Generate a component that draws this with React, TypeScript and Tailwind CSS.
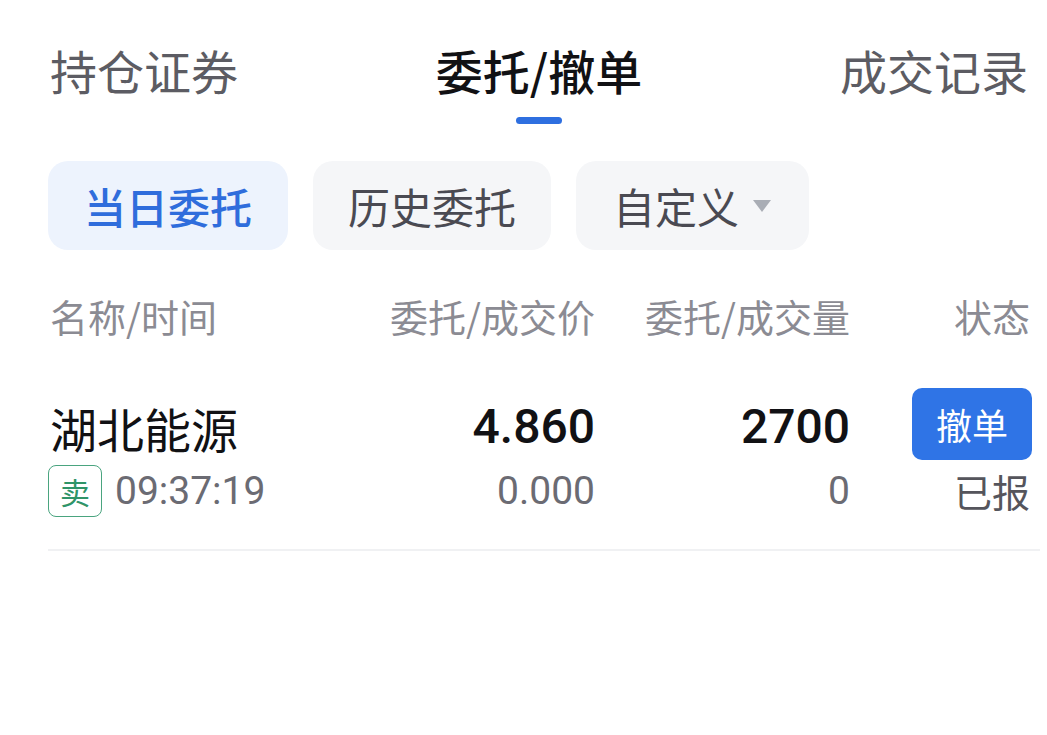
import { useState } from 'react';

const cjk = { fontFamily: '"Noto Sans CJK SC", "Noto Sans", sans-serif' };
const num = { fontFamily: 'Roboto, "Noto Sans CJK SC", sans-serif' };

const tabs = ['持仓证券', '委托/撤单', '成交记录'];

export default function App() {
  const [tab, setTab] = useState(1);
  const [seg, setSeg] = useState(0);

  return (
    <div className="w-[1047px] h-[735px] bg-white pt-[40px] pl-[48px] pr-[15px]" style={cjk}>
      {/* Top tabs */}
      <div className="flex justify-between pl-[2px] pr-[4px]">
        {tabs.map((t, i) => (
          <button
            key={t}
            onClick={() => setTab(i)}
            className="flex flex-col items-center"
          >
            <span
              className={`h-[64px] pb-[6px] flex items-center text-[47px] leading-none ${
                i === tab ? 'text-[#111114] font-medium' : 'text-[#5c5c63]'
              }`}
            >
              {t}
            </span>
            <span
              className={`mt-[13px] w-[46px] h-[7px] rounded-full ${
                i === tab ? 'bg-[#2e6fe0]' : 'bg-transparent'
              }`}
            />
          </button>
        ))}
      </div>

      {/* Segment filters */}
      <div className="flex gap-[25px] mt-[37px]">
        <button
          onClick={() => setSeg(0)}
          className={`h-[89px] w-[240px] rounded-[20px] text-[42px] leading-none ${
            seg === 0 ? 'bg-[#edf3fd] text-[#2f6ddc] font-medium' : 'bg-[#f5f6f8] text-[#4a4a52]'
          }`}
        >
          当日委托
        </button>
        <button
          onClick={() => setSeg(1)}
          className={`h-[89px] w-[238px] rounded-[20px] text-[42px] leading-none ${
            seg === 1 ? 'bg-[#edf3fd] text-[#2f6ddc] font-medium' : 'bg-[#f5f6f8] text-[#4a4a52]'
          }`}
        >
          历史委托
        </button>
        <button
          onClick={() => setSeg(2)}
          className={`h-[89px] w-[233px] rounded-[20px] text-[42px] leading-none flex items-center pl-[37px] ${
            seg === 2 ? 'bg-[#edf3fd] text-[#2f6ddc]' : 'bg-[#f5f6f8] text-[#4a4a52]'
          }`}
        >
          自定义
          <svg className="ml-[13px]" width="20" height="14" viewBox="0 0 20 14">
            <path d="M1 1h18L10 13z" fill="#a9adb5" />
          </svg>
        </button>
      </div>

      {/* Column header */}
      <div className="flex h-[60px] items-center mt-[39px] pb-[6px] text-[38px] leading-none text-[#8b8b93]">
        <div className="w-[310px] pl-[2px]">名称/时间</div>
        <div className="w-[237px] text-right">委托/成交价</div>
        <div className="w-[255px] text-right">委托/成交量</div>
        <div className="flex-1 text-right pr-[2px]">状态</div>
      </div>

      {/* Order row */}
      <div className="mt-[39px] border-b-2 border-[#f0f1f3] pb-[29px] -mr-[8px] pr-[8px]">
        <div className="flex h-[72px] items-center">
          <div className="w-[310px] pl-[2px] text-[47px] leading-none text-[#111114] pt-[6px]">湖北能源</div>
          <div className="w-[237px] text-right text-[48px] leading-none font-medium text-[#111114] pt-[6px]" style={num}>
            4.860
          </div>
          <div className="w-[255px] text-right text-[48px] leading-none font-medium text-[#111114] pt-[6px]" style={num}>
            2700
          </div>
          <div className="flex-1 flex justify-end">
            <button className="w-[120px] h-[72px] rounded-[10px] bg-[#2f74e6] text-white text-[36px] leading-none">
              撤单
            </button>
          </div>
        </div>
        <div className="flex h-[58px] items-center mt-[2px]">
          <div className="w-[310px] flex items-center">
            <span className="w-[54px] h-[52px] rounded-[8px] border-[1.5px] border-[#4aa47f] text-[#2f9468] text-[30px] leading-none flex items-center justify-center">
              卖
            </span>
            <span className="ml-[13px] text-[39px] leading-none text-[#6b6b73]" style={num}>
              09:37:19
            </span>
          </div>
          <div className="w-[237px] text-right text-[39px] leading-none text-[#6b6b73]" style={num}>
            0.000
          </div>
          <div className="w-[255px] text-right text-[39px] leading-none text-[#6b6b73]" style={num}>
            0
          </div>
          <div className="flex-1 text-right text-[38px] leading-none text-[#55555c] pr-[2px]">已报</div>
        </div>
      </div>
    </div>
  );
}
